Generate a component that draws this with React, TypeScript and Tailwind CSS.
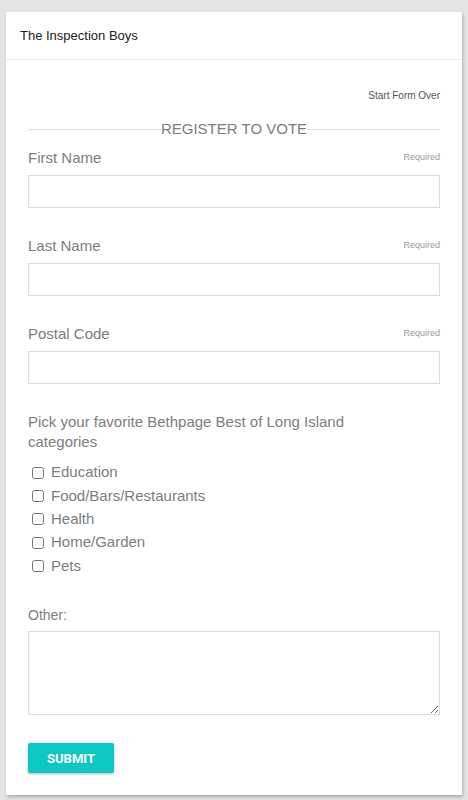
import React from "react";

const categories = ["Education", "Food/Bars/Restaurants", "Health", "Home/Garden", "Pets"];

function Field({ label }: { label: string }) {
  return (
    <div className="mb-[27px]">
      <div className="flex items-center justify-between h-[22px] mb-[6px]">
        <span className="text-[15px] text-[#7d7d7d]">{label}</span>
        <span className="text-[9px] text-[#999]">Required</span>
      </div>
      <input type="text" className="block w-full h-[33px] border border-[#dcdcdc] bg-white outline-none" />
    </div>
  );
}

export default function App() {
  return (
    <div className="min-h-[800px] bg-[#e4e4e4] pt-[12px] px-[6px] pb-[6px]" style={{ fontFamily: '"Liberation Sans", Arial, sans-serif' }}>
      <div className="w-[456px] bg-white shadow-[1px_2px_3px_rgba(0,0,0,0.25)]">
        <div className="h-[48px] flex items-center px-[14px] border-b border-[#ececec]">
          <span className="text-[13px] text-[#222]">The Inspection Boys</span>
        </div>

        <div className="px-[22px] pt-[28px] pb-[22px]">
          <div className="flex justify-end">
            <span className="text-[10px] text-[#555]">Start Form Over</span>
          </div>

          <div className="flex items-center mt-[17px] mb-[9px]">
            <div className="flex-1 h-px bg-[#ddd]" />
            <span className="text-[15px] text-[#7d7d7d] leading-[18px]">REGISTER TO VOTE</span>
            <div className="flex-1 h-px bg-[#ddd]" />
          </div>

          <Field label="First Name" />
          <Field label="Last Name" />
          <Field label="Postal Code" />

          <p className="text-[15px] leading-[20px] text-[#7d7d7d] max-w-[330px] mt-[28px]">
            Pick your favorite Bethpage Best of Long Island categories
          </p>

          <div className="mt-[9px] flex flex-col">
            {categories.map((c) => (
              <label key={c} className="flex items-center h-[23.3px]">
                <input type="checkbox" className="w-[12px] h-[12px] ml-[4px] mr-[7px] m-0" />
                <span className="text-[15px] text-[#7d7d7d]">{c}</span>
              </label>
            ))}
          </div>

          <div className="mt-[28px] text-[14px] text-[#7d7d7d]">Other:</div>
          <textarea className="block w-full h-[84px] mt-[5px] border border-[#dcdcdc] outline-none" />

          <button className="mt-[28px] w-[86px] h-[30px] rounded-[2px] bg-[#0cc7c4] text-white text-[13px] font-bold shadow-[0_1px_3px_rgba(0,0,0,0.3)]" style={{ fontFamily: 'Roboto, "Liberation Sans", sans-serif' }}>
            SUBMIT
          </button>
        </div>
      </div>
    </div>
  );
}
